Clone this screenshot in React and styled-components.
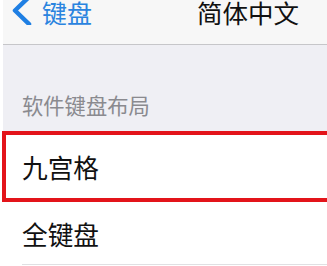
import React from "react";
import styled, { createGlobalStyle } from "styled-components";

const Global = createGlobalStyle`
  html, body { margin: 0; padding: 0; background: #ffffff; }
  body { font-family: "Noto Sans CJK SC", "Noto Sans", sans-serif; overflow: hidden; }
`;

const Page = styled.div`
  width: 327px;
  height: 266px;
  padding-left: 3px;
  box-sizing: border-box;
  overflow: hidden;
  display: flex;
  flex-direction: column;
`;

const NavBar = styled.div`
  height: 44px;
  flex: none;
  background: #f7f7f7;
  border-bottom: 1px solid #c6c6c9;
  position: relative;
  display: flex;
  align-items: flex-start;
`;

const Back = styled.div`
  display: flex;
  align-items: flex-start;
  gap: 8px;
  padding-left: 7px;
  margin-top: -2px;
  color: #2a84df;
  font-size: 25px;
  line-height: 28px;
`;

const Chevron = styled.svg`
  width: 24px;
  height: 30px;
  margin-top: -3px;
  flex: none;
`;

const Title = styled.div`
  position: absolute;
  left: 194px;
  top: -2px;
  font-size: 25.5px;
  line-height: 28px;
  color: #111;
`;

const Section = styled.div`
  background: #efeff4;
  height: 86px;
  flex: none;
  display: flex;
  align-items: flex-end;
  padding: 0 0 14px 19px;
  box-sizing: border-box;
`;

const SectionHeader = styled.div`
  font-size: 21.3px;
  line-height: 24px;
  color: #8a8a8f;
`;

const Row = styled.div`
  height: ${(p) => (p.$selected ? 71 : 63)}px;
  box-sizing: border-box;
  display: flex;
  align-items: center;
  padding-left: ${(p) => (p.$selected ? 16 : 19)}px;
  margin-left: ${(p) => (p.$selected ? -1 : 0)}px;
  background: #fff;
  border: ${(p) => (p.$selected ? "4px solid #e3141a" : "none")};
  border-right: none;
  position: relative;
  flex: none;
  &::after {
    content: "";
    display: ${(p) => (p.$selected ? "none" : "block")};
    position: absolute;
    left: 19px;
    right: 0;
    bottom: 0;
    height: 1px;
    background: #e0e0e3;
  }
`;

const RowLabel = styled.span`
  font-size: 25.7px;
  line-height: 30px;
  color: #111;
`;

export default function App() {
  return (
    <>
      <Global />
      <Page>
        <NavBar>
          <Back>
            <Chevron viewBox="0 0 24 30">
              <polyline
                points="19,2 5,15.5 19,29"
                fill="none"
                stroke="#1f7fe3"
                strokeWidth="4.5"
                strokeLinecap="round"
                strokeLinejoin="round"
              />
            </Chevron>
            <span>键盘</span>
          </Back>
          <Title>简体中文</Title>
        </NavBar>
        <Section>
          <SectionHeader>软件键盘布局</SectionHeader>
        </Section>
        <Row $selected>
          <RowLabel>九宫格</RowLabel>
        </Row>
        <Row>
          <RowLabel>全键盘</RowLabel>
        </Row>
      </Page>
    </>
  );
}
